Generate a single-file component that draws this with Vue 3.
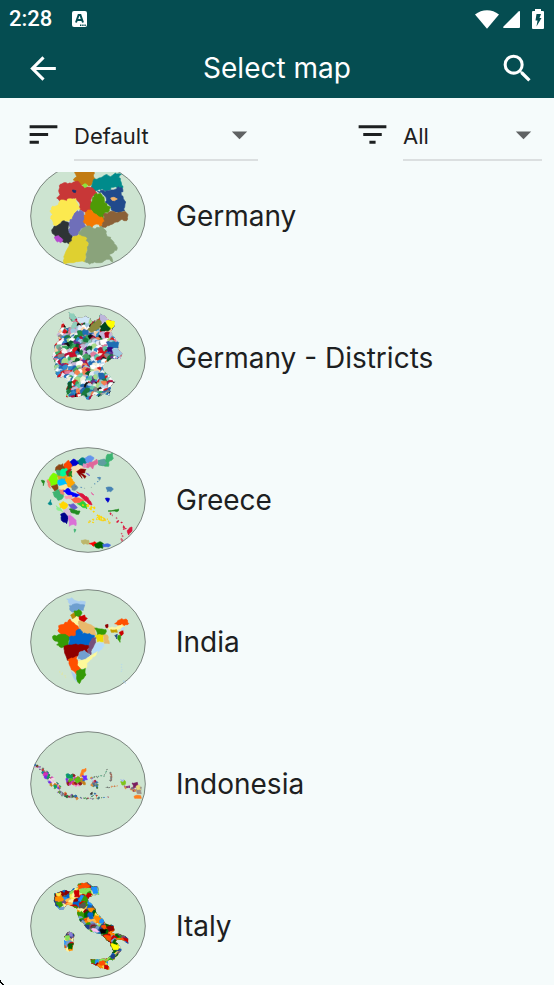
<!--
  SelectMap — map picker screen: sort/filter bar and a scrolling list of maps.
  Thumbnails are drawn on a 348 x 318 grid from plain point lists.
-->
<script setup>
import { onMounted, ref } from 'vue'

const sort = ref('Default')
const filter = ref('All')
const list = ref(null)

// small seeded generator, so that the thumbnails are the same on every load
function seeded(seed) {
  let s = seed
  return () => {
    s = (s * 1664525 + 1013904223) % 4294967296
    return s / 4294967296
  }
}

const toPairs = (text) => {
  const n = text.trim().split(/\s+/).map(Number)
  const out = []
  for (let i = 0; i < n.length; i += 2) out.push([n[i], n[i + 1]])
  return out
}

// splits each edge and shifts the new points a little, for a coast-like border
function ragged(text, amp = 3, seed = 7) {
  const rnd = seeded(seed)
  const pts = toPairs(text)
  const out = []
  pts.forEach(([x, y], i) => {
    const [nx, ny] = pts[(i + 1) % pts.length]
    const steps = Math.max(1, Math.round(Math.hypot(nx - x, ny - y) / 6))
    for (let k = 0; k < steps; k++) {
      const j = k ? amp : 0
      out.push([
        Math.round(x + ((nx - x) * k) / steps + (rnd() - 0.5) * 2 * j),
        Math.round(y + ((ny - y) * k) / steps + (rnd() - 0.5) * 2 * j),
      ])
    }
  })
  return out.map((p) => p.join(',')).join(' ')
}

function blob(x, y, r, rnd) {
  const out = []
  for (let a = 0; a < 7; a++) {
    const d = r * (0.6 + rnd() * 0.7)
    out.push(`${Math.round(x + Math.cos(a * 0.9) * d)},${Math.round(y + Math.sin(a * 0.9) * d)}`)
  }
  return out.join(' ')
}

const regions = (rows, amp = 3) =>
  rows.map(([fill, text], i) => ({ fill, points: ragged(text, amp, i + 3) }))

// patchwork of districts over a box; the layer's clip trims it to the outline
function cells([x0, y0, x1, y1], step, palette, seed) {
  const rnd = seeded(seed)
  const out = []
  for (let y = y0; y < y1; y += step) {
    for (let x = x0; x < x1; x += step) {
      const fill = palette[Math.floor(rnd() * palette.length)]
      const px = x + (rnd() - 0.5) * step
      const py = y + (rnd() - 0.5) * step
      out.push({ fill, points: blob(px, py, step, rnd) })
    }
  }
  return out
}

// islands strewn along a line
function scatter(text, count, spread, size, palette, seed) {
  const rnd = seeded(seed)
  const pts = toPairs(text)
  const out = []
  for (let i = 0; i < count; i++) {
    const t = (i / count) * (pts.length - 1)
    const k = Math.floor(t)
    const [ax, ay] = pts[k]
    const [bx, by] = pts[k + 1]
    const x = ax + (bx - ax) * (t - k) + (rnd() - 0.5) * spread
    const y = ay + (by - ay) * (t - k) + (rnd() - 0.5) * spread
    const fill = palette[Math.floor(rnd() * palette.length)]
    out.push({ fill, points: blob(x, y, size * (0.6 + rnd() * 0.7), rnd) })
  }
  return out
}

const germany = regions([
  ['#c27b12', '148 30 214 30 210 50 216 63 206 77 196 83 184 79 172 81 160 73 150 65 160 55'],
  ['#008b8b', '206 79 210 65 238 55 252 49 262 55 276 44 294 48 286 57 294 73 298 89 284 89 270 87 250 97 236 91 220 97 206 93'],
  ['#c83737', '112 77 122 73 134 77 146 75 150 71 166 71 176 84 200 87 214 95 222 105 208 113 204 131 210 141 204 156 188 162 174 155 166 149 168 133 156 121 140 123 128 129 108 127 100 119 110 109 106 97'],
  ['#214a8c', '222 99 250 97 270 95 284 85 298 91 294 111 304 127 304 157 292 165 276 161 264 155 258 141 246 131 248 117 238 107'],
  ['#4e9a06', '208 117 218 105 232 105 242 117 244 133 262 147 258 157 244 163 240 181 226 177 214 169 204 153 202 141'],
  ['#fce94f', '88 143 104 141 112 125 130 129 142 121 158 121 162 135 170 151 152 167 146 181 132 187 116 189 102 207 90 199 82 181 88 169 80 157'],
  ['#6f6fb9', '152 167 162 157 178 159 188 173 184 193 188 205 172 211 166 225 156 237 144 233 134 221 140 205 134 193 146 183'],
  ['#f57900', '186 163 200 155 216 167 230 177 248 181 242 195 230 205 218 197 206 209 194 205 182 193'],
  ['#8b6138', '240 169 262 159 284 163 304 159 314 169 310 187 296 183 280 191 262 199 248 207 234 205 244 189'],
  ['#2e3436', '90 209 108 197 122 187 136 197 134 217 146 233 142 257 126 253 112 247 96 235 86 221'],
  ['#b64ad0', '92 238 106 232 118 243 112 253 98 247'],
  ['#dfd030', '146 239 160 233 172 227 190 235 196 261 188 283 184 311 170 309 150 313 122 315 124 289 136 265'],
  ['#8aa37b', '166 227 176 211 200 203 216 211 232 203 244 213 250 231 268 247 282 269 270 283 258 287 268 311 250 303 232 313 214 311 200 318 184 309 190 283 196 261 188 235'],
  ['#f4b36a', '262 119 272 117 282 122 274 127 266 126'],
  ['#8ee63a', '178 81 186 76 192 84 184 88'],
  ['#1b2f6b', '147 95 158 97 156 103 149 101'],
])

const districtColors = [
  '#ffffff', '#1f6eb4', '#d9151c', '#1a7a3e', '#8fc9bb', '#c5b6d6', '#f2814f', '#6b2b8c', '#f0f0d8', '#0b5c2a', '#e07a9a',
  '#9ecae1', '#a8dc8a', '#ffffff', '#b30f3c', '#2f8ccc', '#6bb39c', '#e9e9f5', '#2166ac', '#ffffff', '#63c9a8', '#d01c1c',
  '#888888', '#fdd0a2', '#f7f7f7', '#3aa862', '#111111', '#bfd8ee',
]

const districtOutline = ragged(
  '136 36 152 40 158 50 176 52 188 46 200 54 210 64 226 56 232 40 246 48 258 60 274 62 274 78 262 92 276 116 288 126 284 146 298 160 290 176 266 174 250 184 234 196 240 212 258 226 276 244 262 258 258 286 242 280 226 290 214 282 196 298 184 288 160 290 128 290 130 262 136 242 118 228 102 232 92 204 98 188 86 168 96 150 94 134 108 120 100 104 112 84 118 62 128 84 144 82 150 66 138 52', 2)

const districtLarge = regions([
  ['#8fcfbc', '136 34 152 38 158 50 152 62 140 52'],
  ['#cfe6f7', '160 50 176 52 188 46 200 54 194 68 166 66'],
  ['#8fcfbc', '144 64 162 66 160 80 142 84'],
  ['#bdb6dc', '230 38 246 48 258 58 250 66 230 66'],
  ['#8a8a3c', '208 70 228 58 234 68 228 84 206 96 192 90'],
  ['#00441b', '230 78 244 66 254 76 264 82 254 92 232 92'],
  ['#ffff00', '248 62 272 60 274 78 264 86 254 76'],
  ['#c3b8dd', '228 98 244 94 250 112 240 116'],
  ['#b3001e', '244 98 258 96 256 112 246 112'],
  ['#1f6eb4', '250 126 284 124 286 144 256 144'],
  ['#3f007d', '252 142 268 142 266 154 254 154'],
  ['#9ecae1', '268 146 286 146 298 160 288 170 270 162'],
  ['#238b45', '162 92 180 92 182 106 164 106'],
  ['#1f6eb4', '178 92 194 90 194 104 180 104'],
  ['#ffffff', '230 120 246 118 250 132 234 134'],
  ['#4aa564', '178 168 192 160 198 172 186 178'],
  ['#c90f2b', '134 158 154 154 160 168 140 170'],
  ['#2166ac', '226 218 240 218 244 234 228 236'],
  ['#0b5c2a', '130 248 144 244 146 262 134 264'],
], 2)

const greece = regions([
  ['#3cb371', '252 36 268 32 270 48 258 56 256 72 240 70 226 68 226 56 248 52'],
  ['#6495ed', '182 48 202 40 212 46 204 60 188 62'],
  ['#5f9ea0', '224 54 244 50 250 62 238 70 226 66'],
  ['#e0679a', '188 64 204 60 220 50 224 62 212 68 208 80 200 72 190 76'],
  ['#008080', '160 56 180 46 188 60 178 72 160 70'],
  ['#0000cd', '136 60 150 50 166 62 154 74 140 70'],
  ['#ff4500', '122 66 136 54 146 70 142 84 124 84'],
  ['#8b4513', '98 74 118 64 124 80 110 90 96 84'],
  ['#3cb371', '98 84 112 86 116 98 104 104'],
  ['#00fa9a', '112 84 130 78 136 92 126 106 112 102'],
  ['#a0291f', '128 88 144 80 142 98 132 102'],
  ['#228b22', '136 92 146 86 146 104 136 102'],
  ['#f5deb3', '146 76 164 66 182 76 172 88 154 90 148 102'],
  ['#8b0000', '160 88 172 80 188 82 184 92 174 92 188 102 184 108 170 94 176 108 166 96'],
  ['#e08fc0', '180 64 190 68 186 76 178 74'],
  ['#7cfc00', '78 108 90 92 102 98 104 114 98 128 80 130 74 120'],
  ['#fa8072', '72 112 80 122 82 138 74 128'],
  ['#8b4513', '84 132 102 126 104 140 94 146'],
  ['#daa520', '102 100 118 104 130 98 134 114 108 116'],
  ['#00bfff', '104 114 126 108 132 124 118 132 104 126'],
  ['#ffa500', '126 108 142 102 154 120 150 136 134 134'],
  ['#f5e6a0', '108 132 128 126 134 138 118 144'],
  ['#708f9e', '144 132 154 124 164 136 156 144 146 142'],
  ['#3cb371', '88 150 106 142 120 156 116 170 104 174 94 164'],
  ['#f08070', '108 142 122 142 122 158 112 154'],
  ['#0000ff', '120 146 134 138 146 150 170 158 158 166 136 158'],
  ['#ff9cae', '124 162 146 160 142 170 128 170'],
  ['#ff6347', '144 170 160 166 182 174 168 182 152 180'],
  ['#dc143c', '160 148 176 154 194 166 206 188 198 186 180 170'],
  ['#32cd32', '162 184 178 176 192 188 190 200 176 194'],
  ['#ffd700', '108 184 122 178 134 188 126 200 110 196'],
  ['#6a5acd', '136 186 150 184 162 196 150 204'],
  ['#90ee90', '98 190 112 198 118 208 104 204'],
  ['#d8bfd8', '120 206 138 196 148 210 140 224 128 218'],
  ['#228b22', '138 200 158 204 170 206 166 216 148 212'],
  ['#00008b', '112 216 124 212 134 224 130 244 114 234'],
  ['#da70d6', '136 220 148 224 158 234 158 250 150 246 138 252'],
  ['#228b22', '54 114 64 116 60 130'],
  ['#008b8b', '74 184 82 172 86 186 80 188'],
  ['#4682b4', '248 136 260 134 270 140 262 148 252 148'],
  ['#0000cd', '246 168 258 168 254 180 250 176'],
  ['#4682b4', '222 106 232 106 228 114'],
  ['#7b68c8', '188 92 200 100 194 98'],
  ['#e36aa8', '204 150 212 158 206 156'],
  ['#3cb371', '152 260 158 262 154 270'],
  ['#228b22', '254 206 270 204 286 200 280 208 266 206'],
  ['#dc143c', '312 264 326 254 326 266 316 278'],
  ['#bdb76b', '174 294 196 294 200 304 180 306'],
  ['#ff0000', '198 304 214 298 222 304 210 312'],
  ['#006400', '214 306 230 298 240 304 238 318 218 316'],
  ['#4169e1', '238 306 252 304 262 308 256 314 240 314'],
], 2)

const aegean = [
  ...scatter('182 190 210 200 234 226 240 234', 14, 12, 3, ['#ffd700'], 12),
  ...scatter('200 244 222 228 240 232 262 238', 14, 12, 2, ['#ffd700', '#e8c93a'], 21),
  ...scatter('264 212 286 236 300 250 312 264', 10, 10, 2, ['#dc143c', '#c96a7c'], 5),
  ...scatter('296 276 294 300', 4, 5, 3, ['#d9566e'], 9),
  ...scatter('160 132 192 138 224 124 238 98', 7, 10, 1, ['#8aa7a0', '#4682b4'], 4),
]

const india = regions([
  ['#a9cdf0', '130 44 146 40 160 50 186 52 184 64 160 62 142 62'],
  ['#6e9fd0', '138 64 160 58 184 62 180 78 160 84 142 80'],
  ['#b8860b', '142 92 156 82 160 96 148 104'],
  ['#359b06', '152 80 166 76 176 86 168 98 158 96'],
  ['#cc0000', '168 96 184 92 192 102 180 114 170 108'],
  ['#fdf6a0', '144 106 160 96 168 110 164 124 152 118'],
  ['#ff4f00', '106 124 122 120 140 104 152 116 164 126 170 136 156 156 138 160 120 158 104 138'],
  ['#e8b96c', '166 110 182 114 204 122 216 130 218 152 190 154 170 136'],
  ['#359b06', '88 156 104 152 126 150 138 160 134 186 114 190 100 182 106 176 90 166'],
  ['#0066cc', '138 158 158 154 158 140 170 134 178 148 200 148 214 154 206 168 196 184 170 182 136 184'],
  ['#359b06', '214 132 232 134 248 136 244 152 222 152'],
  ['#eedc00', '216 154 240 152 240 172 222 172'],
  ['#e8b96c', '240 152 252 152 258 178 242 176'],
  ['#75507b', '206 162 218 160 216 180 206 194 202 212 192 206 196 186'],
  ['#b5dcfa', '216 178 240 178 242 186 226 202 206 206'],
  ['#8f0000', '122 186 146 182 172 180 196 184 192 204 170 202 162 216 132 228 124 206'],
  ['#729fcf', '168 204 184 198 200 212 184 228 164 222'],
  ['#fdf99a', '162 232 182 226 204 214 222 202 218 212 190 236 188 252 160 252'],
  ['#ff4f00', '134 226 160 216 162 240 172 254 158 268 144 256'],
  ['#359b06', '160 260 186 252 188 272 174 286 168 298 158 284'],
  ['#a9cdf0', '144 262 158 272 160 292 152 282'],
  ['#8f0000', '246 122 254 120 254 130 248 130'],
  ['#ff4f00', '274 118 290 106 308 104 316 118 302 126 290 122'],
  ['#fdf6a0', '254 130 276 130 296 120 304 126 290 134 274 142 258 136'],
  ['#c4a000', '262 136 280 136 282 144 264 144'],
  ['#cc0000', '288 144 298 136 300 148 292 154'],
  ['#359b06', '284 154 292 152 290 174 284 166'],
  ['#204a87', '274 154 282 150 280 164'],
  ['#b5dcfa', '294 132 302 128 302 136 296 138'],
], 2)

const isles = [
  ...scatter('112 262 126 284', 6, 10, 1, ['#dfe8a8'], 3),
  ...scatter('296 242 294 268', 4, 3, 1, ['#b9ddea'], 8),
  ...scatter('302 290 308 302', 2, 2, 1, ['#a5cdf2'], 6),
]

const islandColors = [
  '#3a3a3a', '#c0392b', '#27662e', '#7a4fa0', '#e46ac0', '#2d6fb5', '#777777', '#d98a3a',
  '#4f9e4a', '#8a8a8a', '#9370db', '#b5d9f5', '#a61e3c', '#3a7d7d',
]
const brightColors = ['#0a9e62', '#e0542d', '#d42fb8', '#5fbf10', '#7a2be2', '#c4841b', '#ff77c8', '#2264c8', '#8d1f1f']

const indonesia = [
  ...scatter('38 118 50 124 66 140', 14, 7, 2, islandColors, 33),
  ...scatter('62 138 74 152 92 172 110 186', 40, 16, 3, [...islandColors, ...brightColors], 31),
  ...scatter('70 150 86 166 104 180', 12, 14, 5, [...brightColors, '#f3d9e6'], 8),
  ...scatter('106 198 130 208 166 214', 30, 7, 3, islandColors, 13),
  ...scatter('166 214 206 218 262 212', 16, 4, 1, islandColors, 19),
  ...scatter('136 152 150 166 180 162', 34, 22, 5, brightColors, 17),
  ...scatter('204 154 220 152 244 148 252 126', 14, 4, 1, ['#666666', '#6f7a70', '#58a080'], 41),
  ...scatter('206 156 208 182 214 164 226 190', 20, 7, 3, islandColors, 23),
  ...scatter('262 138 264 168', 8, 4, 2, ['#b85a6a', '#a06a5a', '#777777'], 29),
  ...scatter('250 182 284 180', 8, 4, 1, ['#555555', '#e37a3d'], 37),
  ...scatter('218 204 204 202 234 226', 7, 10, 3, islandColors, 10),
  ...scatter('306 182 328 186 340 198', 12, 8, 3, ['#7a2f7a', '#b05a9e', '#777777', '#d98a3a'], 43),
  ...regions([
    ['#ff7f1e', '176 130 188 126 188 134 180 140 180 152 170 150'],
    ['#6a2bff', '176 148 190 148 192 160 180 160'],
    ['#5fbf10', '152 158 168 152 172 164 160 170'],
    ['#7fc41c', '292 166 304 162 306 174 296 176'],
    ['#9fb4f0', '292 160 302 160 298 166'],
    ['#7a1f5e', '326 170 342 168 344 182 330 184'],
    ['#9c8f86', '340 186 354 182 354 202 342 202'],
    ['#ff7f1e', '332 210 352 208 354 216 334 216'],
    ['#e8dc7a', '338 180 350 178 352 190 342 190'],
  ], 2),
]

const italyColors = [
  '#cc0000', '#0066cc', '#fce94f', '#359b06', '#ff4f00', '#75507b', '#8ae25a', '#1f3f8a',
  '#8f0000', '#fdf6a0', '#729fcf', '#ff8c00', '#006400', '#1e90ff', '#555753', '#ffb84d',
]

const italyOutline = [
  '94 74 110 70 122 64 140 70 150 60 166 58 164 46 192 42 204 52 224 56 228 78 210 80 198 86 194 94 202 104 214 118 220 136 238 152 248 166 270 172 274 186 262 190 278 196 302 202 316 212 316 226 298 216 280 214 276 222 290 234 294 246 280 264 268 276 248 274 262 262 272 248 262 234 260 222 248 214 232 196 210 192 192 182 170 158 162 138 160 120 148 114 132 108 120 124 108 124 96 112 92 92',
  '122 204 138 190 152 196 150 220 148 246 134 250 124 238',
  '202 272 222 272 252 270 254 284 258 304 240 304 222 292 204 286',
]

const italyLarge = regions([
  ['#ff4f00', '164 50 190 44 200 52 190 58 166 62'],
  ['#1e90ff', '204 56 220 56 224 74 210 76'],
  ['#ff8c00', '96 86 114 80 122 94 110 102 96 98'],
  ['#fce94f', '98 74 112 72 110 82 100 82'],
  ['#359b06', '98 102 114 100 120 110 108 118'],
  ['#cc0000', '154 66 166 64 168 86 154 86'],
  ['#8ae25a', '168 64 186 60 188 76 170 74'],
  ['#8f0000', '250 176 270 174 272 184 258 190'],
  ['#000000', '230 184 250 184 246 194 234 196'],
  ['#ffc0f0', '204 182 218 182 228 190 210 190'],
  ['#ffff00', '262 226 286 232 284 244 270 244'],
  ['#ff4f00', '242 202 262 204 262 220 252 216'],
  ['#1f3f8a', '262 262 276 258 272 272 264 270'],
  ['#8a7fd8', '136 194 148 192 148 204 138 202'],
  ['#8ae25a', '124 204 138 202 136 216 126 214'],
  ['#006400', '134 228 148 226 146 242 136 242'],
  ['#0066cc', '194 134 208 134 210 150 198 150'],
  ['#cc0000', '300 208 314 212 314 222 304 216'],
  ['#359b06', '204 272 214 274 214 286 204 284'],
  ['#ff4f00', '228 280 244 278 244 290 230 290'],
  ['#cc0000', '244 290 256 292 254 304 244 302'],
], 2)

const maps = [
  { name: 'Germany', layers: [{ shapes: germany }] },
  {
    name: 'Germany - Districts',
    layers: [
      { clip: [districtOutline], shapes: [...cells([84, 34, 304, 304], 9, districtColors, 77), ...districtLarge] },
    ],
  },
  { name: 'Greece', layers: [{ shapes: [...greece, ...aegean] }] },
  { name: 'India', layers: [{ shapes: [...india, ...isles] }] },
  { name: 'Indonesia', layers: [{ shapes: indonesia }] },
  {
    name: 'Italy',
    layers: [
      { clip: italyOutline.map((o) => ragged(o, 2)), shapes: [...cells([92, 42, 320, 306], 11, italyColors, 15), ...italyLarge] },
    ],
  },
]

// reopen the list where the first rows are partly scrolled away
onMounted(() => {
  list.value.scrollTop = 27
})
</script>

<template>
  <div class="screen">
    <header class="top">
      <div class="status">
        <span class="clock">2:28</span>
        <svg class="badge" viewBox="0 0 15 17" aria-hidden="true">
          <rect width="15" height="16" y="0" rx="2" fill="#fff" />
          <path class="badge-a" d="M4 11.500 6.600 4H8.400L11 11.500M5.200 9H9.800" />
          <path d="M8 13.500h1.400v1.400H8zM10.200 13.500h1.400v1.400h-1.400zM12.400 13.500h1.400v1.400h-1.400z" fill="#054d51" />
        </svg>
        <div class="signals">
          <svg class="wifi" viewBox="0 0 24 19" aria-hidden="true">
            <path d="M0 4.500C7 -1.300 17 -1.300 24 4.500L12 18.800z" fill="#fff" />
          </svg>
          <svg class="cell" viewBox="0 0 17 17" aria-hidden="true">
            <path d="M17 1v15a1 1 0 0 1-1 1H1q-1.500-.4-.5-1.500L15.500.5Q17-.5 17 1z" fill="#fff" />
          </svg>
          <svg class="battery" viewBox="0 0 12 20" aria-hidden="true">
            <path d="M3 0h6v2h2q1 0 1 1v16q0 1-1 1H1q-1 0-1-1V3q0-1 1-1h2z" fill="#fff" />
            <path d="M4.500 5H9L7.500 9H9.500L4.500 17.500 5.500 11.500H3.500z" fill="#054d51" />
          </svg>
        </div>
      </div>
      <div class="appbar">
        <button class="icon-btn" type="button" aria-label="Back">
          <svg class="icon" viewBox="0 0 24 24">
            <path class="back" d="M20 12H5M12 4.800 4.800 12 12 19.200" />
          </svg>
        </button>
        <h1 class="title">Select map</h1>
        <button class="icon-btn" type="button" aria-label="Search">
          <svg class="icon" viewBox="0 0 24 24">
            <path class="search" d="M15.500 14h-.790l-.280-.270A6.471 6.471 0 0 0 16 9.500 6.500 6.500 0 1 0 9.500 16c1.610 0 3.090-.590 4.230-1.570l.270.280v.790l5 4.990L20.490 19l-4.990-5zm-6 0C7.010 14 5 11.990 5 9.500S7.010 5 9.500 5 14 7.010 14 9.500 11.990 14 9.500 14z" />
          </svg>
        </button>
      </div>
    </header>

    <div class="filters">
      <div class="field">
        <label for="sort" aria-label="Sort">
          <svg class="icon" viewBox="0 0 24 24">
            <path fill="#1d2021" d="M3 18h6v-2H3v2zM3 6v2h18V6H3zm0 7h12v-2H3v2z" />
          </svg>
        </label>
        <div class="pick pick-sort">
          <select id="sort" v-model="sort">
            <option>Default</option>
            <option>Name</option>
          </select>
          <svg class="icon caret" viewBox="0 0 24 24"><path fill="#5f6263" d="M7 10l5 5 5-5z" /></svg>
        </div>
      </div>
      <div class="field">
        <label for="filter" aria-label="Filter">
          <svg class="icon" viewBox="0 0 24 24">
            <path fill="#1d2021" d="M10 18h4v-2h-4v2zM3 6v2h18V6H3zm3 7h12v-2H6v2z" />
          </svg>
        </label>
        <div class="pick pick-filter">
          <select id="filter" v-model="filter">
            <option>All</option>
            <option>Europe</option>
            <option>Asia</option>
          </select>
          <svg class="icon caret" viewBox="0 0 24 24"><path fill="#5f6263" d="M7 10l5 5 5-5z" /></svg>
        </div>
      </div>
    </div>

    <ul ref="list" class="maps">
      <li v-for="(map, m) in maps" :key="map.name">
        <a class="row" href="#">
          <svg class="thumb" viewBox="20 14 348 318" aria-hidden="true">
            <ellipse class="globe" cx="194" cy="173" rx="172" ry="157" />
            <g v-for="(layer, l) in map.layers" :key="l" :clip-path="layer.clip ? `url(#clip-${m}-${l})` : null">
              <clipPath v-if="layer.clip" :id="`clip-${m}-${l}`">
                <polygon v-for="(c, i) in layer.clip" :key="i" :points="c" />
              </clipPath>
              <polygon v-for="(s, i) in layer.shapes" :key="i" :points="s.points" :fill="s.fill" :stroke="s.fill" />
            </g>
          </svg>
          <span class="name">{{ map.name }}</span>
        </a>
      </li>
    </ul>

    <svg class="corner" viewBox="0 0 4 5" aria-hidden="true">
      <path d="M0 0h1v2h1v1h1v1h1v1H2V4H1V3H0z" />
    </svg>
  </div>
</template>

<style>
body {
  background: #f5fbfb;
}
</style>

<style scoped>
.screen {
  position: relative;
  display: flex;
  flex-direction: column;
  height: 100vh;
  overflow: hidden;
  background: #f5fbfb;
  color: #1d2021;
  font-family: Inter, "Liberation Sans", sans-serif;
}

.top {
  flex-shrink: 0;
  background: #054d51;
  color: #fff;
}
.status {
  display: flex;
  align-items: center;
  height: 38px;
  padding: 0 10px 0 9px;
}
.clock {
  font-family: Roboto, sans-serif;
  font-size: 22px;
  font-weight: 500;
  line-height: 40px;
}
.badge {
  width: 15px;
  height: 17px;
  margin-left: 20px;
}
.badge-a {
  fill: none;
  stroke: #054d51;
  stroke-width: 2;
}
.signals {
  display: flex;
  align-items: center;
  margin-left: auto;
}
.wifi { width: 24px; height: 19px; }
.cell { width: 17px; height: 17px; margin-left: 4px; }
.battery { width: 12px; height: 20px; margin-left: 12px; }

.appbar {
  display: flex;
  align-items: center;
  justify-content: space-between;
  height: 60px;
  padding: 0 18px 0 25px;
}
.title {
  flex: 1;
  margin: 0 7px 0 0;
  font-size: 28px;
  font-weight: 400;
  line-height: 36px;
  text-align: center;
}
.icon-btn {
  padding: 0;
  border: 0;
  background: none;
  cursor: pointer;
}
.icon {
  display: block;
  width: 37px;
  height: 37px;
}
.back {
  fill: none;
  stroke: #fff;
  stroke-width: 2;
}
.search {
  fill: #fff;
}

.filters {
  flex-shrink: 0;
  display: flex;
  justify-content: space-between;
  height: 56px;
  padding: 18px 12px 0 25px;
}
.field {
  display: flex;
  gap: 12px;
}
.pick {
  display: grid;
  height: 43px;
  border-bottom: 2px solid #dbdfe0;
}
.pick-sort { width: 184px; }
.pick-filter { width: 139px; }
.pick select,
.caret {
  grid-area: 1 / 1;
}
.pick select {
  width: 100%;
  height: 40px;
  padding: 0;
  border: 0;
  appearance: none;
  background: none;
  color: inherit;
  font-family: inherit;
  font-size: 22px;
  line-height: 40px;
}
.caret {
  justify-self: end;
  pointer-events: none;
}

.maps {
  flex: 1;
  min-height: 0;
  margin: 0;
  padding: 0;
  overflow-y: auto;
  list-style: none;
  scrollbar-width: none;
}
.row {
  display: flex;
  align-items: center;
  gap: 30px;
  height: 142px;
  padding: 0 30px;
  color: inherit;
  text-decoration: none;
}
.thumb {
  flex-shrink: 0;
  width: 116px;
  height: 106px;
}
.thumb polygon {
  stroke-width: 2;
}
.globe {
  fill: #cde4d1;
  stroke: #4c524e;
  stroke-width: 2;
}
.name {
  font-size: 28px;
  line-height: 36px;
}

/* rounded window corner */
.corner {
  position: absolute;
  left: 0;
  bottom: 0;
  width: 4px;
  height: 5px;
}
</style>
